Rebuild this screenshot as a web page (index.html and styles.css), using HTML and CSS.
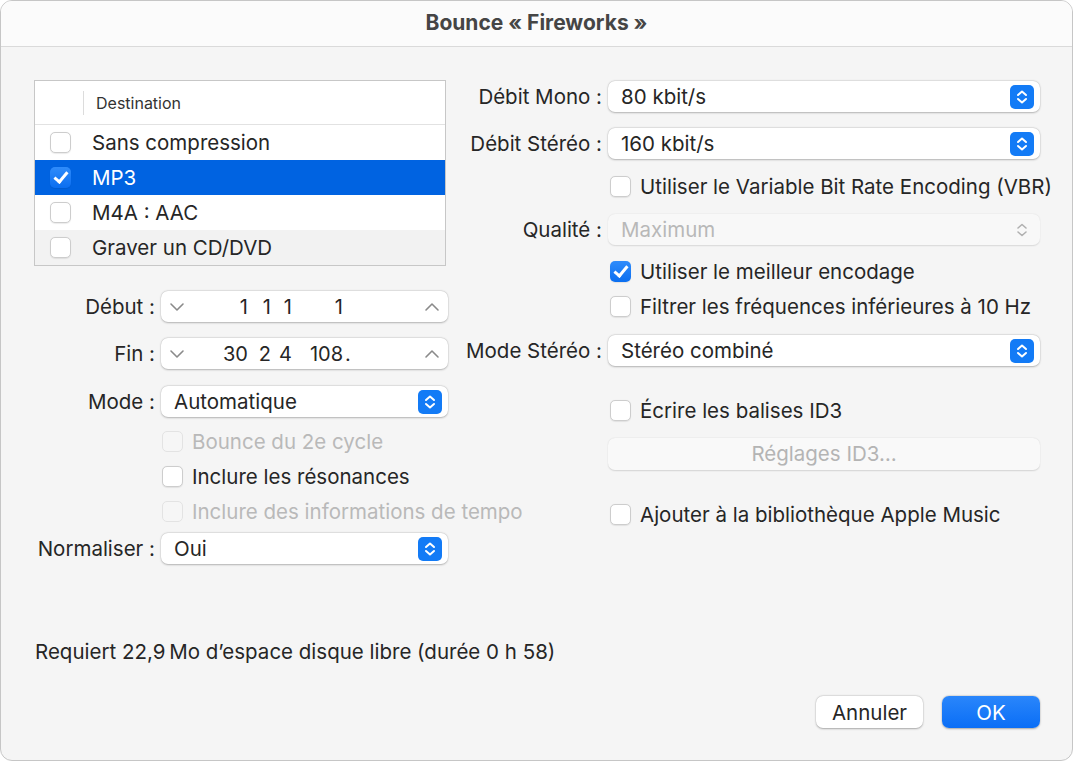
FILE: index.html
```html
<!DOCTYPE html>
<html lang="fr">
  <head>
    <meta charset="UTF-8" />
    <title>Bounce « Fireworks »</title>
    <link rel="stylesheet" href="styles.css">
  </head>
  <body>
    <div class="window">
      <!-- Title bar -->
      <div class="titlebar">Bounce « Fireworks »</div>

      <div class="content">
        <div class="columns">
          <!-- Left column -->
          <div class="left">
            <div class="dest-list">
              <div class="dest-header">
                <span class="dest-sep"></span>
                <span>Destination</span>
              </div>
              <div class="dest-row">
                <span class="check"></span>
                <span>Sans compression</span>
              </div>
              <div class="dest-row selected">
                <span class="check on"></span>
                <span>MP3</span>
              </div>
              <div class="dest-row">
                <span class="check"></span>
                <span>M4A : AAC</span>
              </div>
              <div class="dest-row alt">
                <span class="check"></span>
                <span>Graver un CD/DVD</span>
              </div>
            </div>

            <div class="frow start">
              <label class="lbl">Début :</label>
              <div class="stepper">
                <svg class="chev" width="16" height="10" viewBox="0 0 16 10"><path d="M2 2 L8 8 L14 2" /></svg>
                <div class="pos">
                  <span class="s1">1</span><span class="s2">1</span><span class="s3">1</span><span class="s4">1</span>
                </div>
                <svg class="chev up" width="16" height="10" viewBox="0 0 16 10"><path d="M2 8 L8 2 L14 8" /></svg>
              </div>
            </div>

            <div class="frow end">
              <label class="lbl">Fin :</label>
              <div class="stepper">
                <svg class="chev" width="16" height="10" viewBox="0 0 16 10"><path d="M2 2 L8 8 L14 2" /></svg>
                <div class="pos">
                  <span class="s1">30</span><span class="s2">2</span><span class="s3">4</span><span class="s4">108</span><span class="s5">.</span>
                </div>
                <svg class="chev up" width="16" height="10" viewBox="0 0 16 10"><path d="M2 8 L8 2 L14 8" /></svg>
              </div>
            </div>

            <div class="frow mode">
              <label class="lbl">Mode :</label>
              <div class="popup">
                <span>Automatique</span>
                <svg class="arrows" width="24" height="24" viewBox="0 0 24 24"><rect width="24" height="24" rx="5" /><path d="M8 10 L12 6.5 L16 10 M8 14 L12 17.5 L16 14" /></svg>
              </div>
            </div>

            <div class="opts">
              <div class="opt disabled"><span class="check"></span><span>Bounce du 2e cycle</span></div>
              <div class="opt"><span class="check"></span><span>Inclure les résonances</span></div>
              <div class="opt disabled"><span class="check"></span><span>Inclure des informations de tempo</span></div>
            </div>

            <div class="frow norm">
              <label class="lbl">Normaliser :</label>
              <div class="popup">
                <span>Oui</span>
                <svg class="arrows" width="24" height="24" viewBox="0 0 24 24"><rect width="24" height="24" rx="5" /><path d="M8 10 L12 6.5 L16 10 M8 14 L12 17.5 L16 14" /></svg>
              </div>
            </div>
          </div>

          <!-- Right column -->
          <div class="right">
            <div class="rrow">
              <label class="lbl">Débit Mono :</label>
              <div class="popup">
                <span>80 kbit/s</span>
                <svg class="arrows" width="24" height="24" viewBox="0 0 24 24"><rect width="24" height="24" rx="5" /><path d="M8 10 L12 6.5 L16 10 M8 14 L12 17.5 L16 14" /></svg>
              </div>
            </div>

            <div class="rrow r2">
              <label class="lbl">Débit Stéréo :</label>
              <div class="popup">
                <span>160 kbit/s</span>
                <svg class="arrows" width="24" height="24" viewBox="0 0 24 24"><rect width="24" height="24" rx="5" /><path d="M8 10 L12 6.5 L16 10 M8 14 L12 17.5 L16 14" /></svg>
              </div>
            </div>

            <div class="opt r3"><span class="check"></span><span>Utiliser le Variable Bit Rate Encoding (VBR)</span></div>

            <div class="rrow r4">
              <label class="lbl">Qualité :</label>
              <div class="popup off">
                <span>Maximum</span>
                <svg class="arrows" width="24" height="24" viewBox="0 0 24 24"><path d="M8 10 L12 6.5 L16 10 M8 14 L12 17.5 L16 14" /></svg>
              </div>
            </div>

            <div class="opt r5"><span class="check on"></span><span>Utiliser le meilleur encodage</span></div>
            <div class="opt"><span class="check"></span><span>Filtrer les fréquences inférieures à 10 Hz</span></div>

            <div class="rrow r7">
              <label class="lbl">Mode Stéréo :</label>
              <div class="popup">
                <span>Stéréo combiné</span>
                <svg class="arrows" width="24" height="24" viewBox="0 0 24 24"><rect width="24" height="24" rx="5" /><path d="M8 10 L12 6.5 L16 10 M8 14 L12 17.5 L16 14" /></svg>
              </div>
            </div>

            <div class="opt r8"><span class="check"></span><span>Écrire les balises ID3</span></div>
            <div class="btn-id3">Réglages ID3…</div>
            <div class="opt r10"><span class="check"></span><span>Ajouter à la bibliothèque Apple Music</span></div>
          </div>
        </div>

        <div class="note">Requiert 22,9&#8239;Mo d’espace disque libre (durée 0 h 58)</div>

        <div class="buttons">
          <button class="btn">Annuler</button>
          <button class="btn primary">OK</button>
        </div>
      </div>
    </div>
  </body>
</html>
```

FILE: styles.css
```css
/* Global */
body {
  margin: 0;
  background: #ffffff;
  font-family: "Inter", "Noto Sans", sans-serif;
  font-size: 20.5px;
  color: #262626;
}

.window {
  width: 1073px;
  height: 761px;
  box-sizing: border-box;
  border: 1px solid #c6c6c6;
  border-radius: 12px;
  overflow: hidden;
  background: #f5f5f5;
}

/* Title bar */
.titlebar {
  height: 45px;
  line-height: 44px;
  background: #fbfbfb;
  border-bottom: 1px solid #dadada;
  text-align: center;
  font-weight: 700;
  font-size: 21px;
  color: #454545;
}

.content {
  padding: 33px 0 0 33px;
}

.columns {
  display: flex;
  gap: 18px;
  height: 484px;
}

/* Left column */
.left {
  width: 414px;
}

.dest-list {
  width: 410px;
  height: 184px;
  border: 1px solid #c7c7c7;
  background: #ffffff;
}

.dest-header {
  height: 43px;
  border-bottom: 1px solid #e2e2e2;
  display: flex;
  align-items: center;
  font-size: 16px;
  color: #333;
}

.dest-sep {
  width: 1px;
  height: 24px;
  background: #dcdcdc;
  margin: 0 12px 0 48px;
}

.dest-row {
  height: 35px;
  display: flex;
  align-items: center;
  gap: 21px;
  padding-left: 15px;
}

.dest-row.alt {
  background: #f2f2f2;
}

.dest-row.selected {
  background: #0063e1;
  color: #ffffff;
}

/* Checkbox */
.check {
  flex: none;
  width: 21px;
  height: 21px;
  box-sizing: border-box;
  border: 1px solid #cdcdcd;
  border-radius: 5px;
  background: #ffffff;
  box-shadow: 0 0.5px 1px rgba(0, 0, 0, 0.08);
  position: relative;
}

.check.on {
  border: none;
  background: linear-gradient(#2f8cfb, #0b6ef0);
}

.check.on::after {
  content: "";
  position: absolute;
  left: 7px;
  top: 2px;
  width: 5px;
  height: 11px;
  border: solid #ffffff;
  border-width: 0 3px 3px 0;
  transform: rotate(40deg);
}

/* Left form rows */
.frow {
  display: flex;
  align-items: center;
  gap: 6px;
  height: 31px;
}

.frow .lbl {
  width: 121px;
  flex: none;
}

.frow > .stepper,
.frow > .popup {
  width: 287px;
  box-sizing: border-box;
}

.frow.start { margin-top: 25px; }
.frow.end { margin-top: 16px; }
.frow.mode { margin-top: 17px; }
.frow.norm { margin-top: 4px; }

.opts {
  margin-top: 7px;
  padding-left: 127px;
}

.lbl {
  text-align: right;
  white-space: nowrap;
}

/* Stepper field */
.stepper {
  height: 31px;
  background: #ffffff;
  border-radius: 7px;
  box-shadow: 0 0.5px 2px rgba(0, 0, 0, 0.25), 0 0 0 0.5px rgba(0, 0, 0, 0.06);
  display: flex;
  align-items: center;
  padding: 0 8px;
}

.chev {
  flex: none;
}

.chev.up {
  margin-left: auto;
}

.chev path {
  fill: none;
  stroke: #8a8a8a;
  stroke-width: 1.6;
  stroke-linecap: round;
  stroke-linejoin: round;
}

.pos {
  display: flex;
  font-size: 20px;
}

.pos span {
  text-align: right;
}

.s1 { width: 63px; }
.s2 { width: 23px; }
.s3 { width: 21px; }
.s4 { width: 51px; }
.s5 { width: 10px; text-align: center !important; }

/* Popup button */
.popup {
  height: 31px;
  background: #ffffff;
  border-radius: 7px;
  box-shadow: 0 0.5px 2px rgba(0, 0, 0, 0.25), 0 0 0 0.5px rgba(0, 0, 0, 0.06);
  display: flex;
  align-items: center;
  justify-content: space-between;
  padding: 0 6px 0 13px;
}

.arrows rect {
  fill: #137bf6;
}

.arrows path {
  fill: none;
  stroke: #ffffff;
  stroke-width: 2;
  stroke-linecap: round;
  stroke-linejoin: round;
}

.popup.off {
  background: #f8f8f8;
  color: #b8b8b8;
  box-shadow: 0 0.5px 1.5px rgba(0, 0, 0, 0.12);
}

.popup.off .arrows path {
  stroke: #b0b0b0;
  stroke-width: 1.6;
}

/* Option rows */
.opt {
  display: flex;
  align-items: center;
  gap: 9px;
  height: 35px;
  padding-left: 1px;
  white-space: nowrap;
}

.opt.disabled {
  color: #b9b9b9;
}

.opt.disabled .check {
  background: #f6f6f6;
  border-color: #e3e3e3;
  box-shadow: none;
}

/* Right column */
.right {
  width: 574px;
  margin-top: 1px;
}

.rrow {
  display: flex;
  align-items: center;
  gap: 6px;
  height: 31px;
}

.rrow .lbl {
  width: 136px;
  flex: none;
}

.rrow .popup {
  width: 432px;
  box-sizing: border-box;
}

.right > .opt {
  margin-left: 142px;
  padding-left: 2px;
}

.r2 { margin-top: 16px; }
.r3 { margin-top: 10px; }
.r4 { margin-top: 10px; }
.r5 { margin-top: 9px; }
.r7 { margin-top: 11px; }
.r8 { margin-top: 27px; }
.r10 { margin-top: 27px; }

.btn-id3 {
  margin: 10px 0 0 142px;
  width: 432px;
  height: 32px;
  line-height: 32px;
  text-align: center;
  color: #b4b4b4;
  background: #f9f9f9;
  border-radius: 7px;
  box-shadow: 0 0.5px 1.5px rgba(0, 0, 0, 0.14);
}

/* Footer */
.note {
  margin-top: 78px;
  margin-left: 1px;
  line-height: 20px;
}

.buttons {
  display: flex;
  justify-content: flex-end;
  gap: 19px;
  margin-top: 34px;
  padding-right: 32px;
}

.btn {
  font-family: inherit;
  font-size: 20.5px;
  height: 32px;
  border: none;
  border-radius: 7px;
  background: #ffffff;
  color: #262626;
  box-shadow: 0 0.5px 2px rgba(0, 0, 0, 0.3), 0 0 0 0.5px rgba(0, 0, 0, 0.05);
  width: 107px;
  padding: 0;
}

.btn.primary {
  width: 98px;
  color: #ffffff;
  background: linear-gradient(#2a86fb, #0a6ef6);
}
```
